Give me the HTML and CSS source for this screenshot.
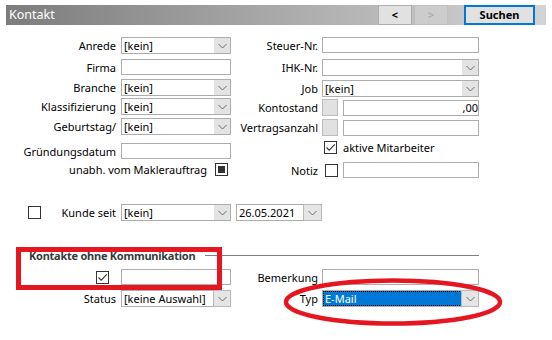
FILE: index.html
```html
<!DOCTYPE html>
<html lang="de">
<head>
<meta charset="utf-8">
<title>Kontakt</title>
<link rel="stylesheet" href="styles.css">
</head>
<body>
<div class="window">
  <div class="titlebar">
    <span class="title">Kontakt</span>
    <div class="nav">
      <button class="btn">&lt;</button>
      <button class="btn disabled">&gt;</button>
      <button class="btn primary">Suchen</button>
    </div>
  </div>

  <div class="form top">
    <!-- row 1 -->
    <label class="lbl">Anrede</label>
    <div class="combo"><span class="val">[kein]</span><span class="drop"><svg width="9" height="6" viewBox="0 0 9 6"><polyline points="0.5,1 4.5,5 8.5,1" fill="none" stroke="#6a6a6a" stroke-width="1"/></svg></span></div>
    <label class="lbl r">Steuer-Nr.</label>
    <div class="input"></div>

    <!-- row 2 -->
    <label class="lbl">Firma</label>
    <div class="input"></div>
    <label class="lbl r">IHK-Nr.</label>
    <div class="combo"><span class="val"></span><span class="drop"><svg width="9" height="6" viewBox="0 0 9 6"><polyline points="0.5,1 4.5,5 8.5,1" fill="none" stroke="#6a6a6a" stroke-width="1"/></svg></span></div>

    <!-- row 3 -->
    <label class="lbl">Branche</label>
    <div class="combo"><span class="val">[kein]</span><span class="drop"><svg width="9" height="6" viewBox="0 0 9 6"><polyline points="0.5,1 4.5,5 8.5,1" fill="none" stroke="#6a6a6a" stroke-width="1"/></svg></span></div>
    <label class="lbl r down1">Job</label>
    <div class="combo down1"><span class="val">[kein]</span><span class="drop"><svg width="9" height="6" viewBox="0 0 9 6"><polyline points="0.5,1 4.5,5 8.5,1" fill="none" stroke="#6a6a6a" stroke-width="1"/></svg></span></div>

    <!-- row 4 -->
    <label class="lbl">Klassifizierung</label>
    <div class="combo"><span class="val">[kein]</span><span class="drop"><svg width="9" height="6" viewBox="0 0 9 6"><polyline points="0.5,1 4.5,5 8.5,1" fill="none" stroke="#6a6a6a" stroke-width="1"/></svg></span></div>
    <label class="lbl r down1">Kontostand</label>
    <div class="pair down1"><span class="graybox"></span><div class="input grow num">,00</div></div>

    <!-- row 5 -->
    <label class="lbl">Geburtstag/</label>
    <div class="combo"><span class="val">[kein]</span><span class="drop"><svg width="9" height="6" viewBox="0 0 9 6"><polyline points="0.5,1 4.5,5 8.5,1" fill="none" stroke="#6a6a6a" stroke-width="1"/></svg></span></div>
    <label class="lbl r down1">Vertragsanzahl</label>
    <div class="pair down1"><span class="graybox"></span><div class="input grow"></div></div>

    <!-- row 6 -->
    <label class="lbl down4">Gründungsdatum</label>
    <div class="input down4"></div>
    <span class="empty"></span>
    <div class="pair down1">
      <span class="check"><svg width="11" height="11" viewBox="0 0 11 11"><polyline points="1.5,5.5 4.2,8.2 9.8,2.4" fill="none" stroke="#333" stroke-width="1.1"/></svg></span>
      <span class="ctext">aktive Mitarbeiter</span>
    </div>

    <!-- row 7 -->
    <div class="span2 down1">
      <span class="ltext">unabh. vom Maklerauftrag</span>
      <span class="check ind"><span class="dot"></span></span>
    </div>
    <label class="lbl r down1">Notiz</label>
    <div class="pair down1">
      <span class="check small"></span>
      <div class="input grow"></div>
    </div>
  </div>

  <div class="form kunde">
    <div class="lblflex">
      <span class="check"></span>
      <span class="ktext">Kunde seit</span>
    </div>
    <div class="combo"><span class="val">[kein]</span><span class="drop"><svg width="9" height="6" viewBox="0 0 9 6"><polyline points="0.5,1 4.5,5 8.5,1" fill="none" stroke="#6a6a6a" stroke-width="1"/></svg></span></div>
    <div class="combo date"><span class="val">26.05.2021</span><span class="drop boxed"><svg width="9" height="6" viewBox="0 0 9 6"><polyline points="0.5,1 4.5,5 8.5,1" fill="none" stroke="#6a6a6a" stroke-width="1"/></svg></span></div>
  </div>

  <div class="grouphead">
    <span class="gtitle">Kontakte ohne Kommunikation</span>
    <span class="gline"></span>
  </div>

  <div class="form group">
    <div class="lblflex end">
      <span class="check"><svg width="11" height="11" viewBox="0 0 11 11"><polyline points="1.5,5.5 4.2,8.2 9.8,2.4" fill="none" stroke="#333" stroke-width="1.1"/></svg></span>
    </div>
    <div class="input"></div>
    <label class="lbl r">Bemerkung</label>
    <div class="input"></div>

    <label class="lbl">Status</label>
    <div class="combo"><span class="val">[keine Auswahl]</span><span class="drop boxed"><svg width="9" height="6" viewBox="0 0 9 6"><polyline points="0.5,1 4.5,5 8.5,1" fill="none" stroke="#6a6a6a" stroke-width="1"/></svg></span></div>
    <label class="lbl r">Typ</label>
    <div class="combo"><span class="val"><span class="sel">E-Mail</span></span><span class="drop boxed"><svg width="9" height="6" viewBox="0 0 9 6"><polyline points="0.5,1 4.5,5 8.5,1" fill="none" stroke="#6a6a6a" stroke-width="1"/></svg></span></div>
  </div>

  <div class="mark-rect"></div>
  <svg class="mark-ellipse" width="232" height="60" viewBox="0 0 232 60">
    <ellipse cx="116" cy="30" rx="107" ry="21.5" fill="none" stroke="#e5161f" stroke-width="4.5"/>
  </svg>
</div>
</body>
</html>
```

FILE: styles.css
```css
* { box-sizing: border-box; }

html, body {
  margin: 0;
  padding: 0;
  background: #ffffff;
}

body {
  font-family: "Segoe UI", "Noto Sans", "Open Sans", sans-serif;
  font-size: 11px;
  color: #000;
  width: 552px;
  height: 340px;
  overflow: hidden;
}

.window {
  position: relative;
  width: 552px;
  height: 340px;
}

/* title bar */
.titlebar {
  margin: 5px 6px 0 6px;
  height: 20px;
  display: flex;
  align-items: center;
  padding-left: 3px;
  background: linear-gradient(to right, #7c7c7c 0%, #a9a9a9 50%, #d4d4d4 100%);
}

.title {
  color: #fff;
  font-size: 12.5px;
  line-height: 20px;
}

.nav {
  margin-left: auto;
  display: flex;
  align-items: center;
  padding-right: 11px;
}

.btn {
  font-family: inherit;
  font-size: 11px;
  height: 20px;
  width: 34px;
  padding: 0;
  margin: 0 2px 0 0;
  border: 1px solid #adadad;
  background: #e1e1e1;
  color: #000;
  font-weight: 700;
  line-height: 16px;
}

.btn.disabled {
  background: #cccccc;
  border-color: #bfbfbf;
  color: #a2a2a2;
  font-weight: 400;
  margin-right: 16px;
}

.btn.primary {
  width: 71px;
  border: 2px solid #0078d7;
  margin: 0;
}

/* form grid */
.form {
  display: grid;
  grid-template-columns: 121px 110px 91px 157px;
  align-items: start;
}

.form.top {
  margin-top: 12px;
  grid-template-rows: 22px 20px 19px 20px 21px 22px 22px;
}

.lbl {
  text-align: right;
  padding-right: 5px;
  line-height: 17px;
  height: 17px;
  white-space: nowrap;
}

.lbl.r {
  padding-right: 4px;
}

.input {
  height: 16px;
  border: 1px solid #adadad;
  background: #fff;
}

.input.grow {
  flex: 1;
}

.input.num {
  text-align: right;
  line-height: 14px;
  padding-right: 0;
}

.combo {
  height: 17px;
  display: flex;
  border: 1px solid #adadad;
  background: #fff;
}

.combo .val {
  flex: 1;
  padding-left: 2px;
  line-height: 15px;
  white-space: nowrap;
  overflow: hidden;
  display: flex;
}

.combo .drop {
  width: 16px;
  background: #e3e3e3;
  display: flex;
  align-items: center;
  justify-content: center;
}

.combo .drop.boxed {
  width: 18px;
  border: 1px solid #b9b9b9;
  margin: -1px -1px -1px 0;
  background: #e5e5e5;
}

.pair {
  display: flex;
  align-items: center;
}

.graybox {
  width: 16px;
  height: 17px;
  background: #e1e1e1;
  border: 1px solid #bcbcbc;
  margin-right: 5px;
}

.down1 { margin-top: 1px; }
.down4 { margin-top: 4px; }

.check {
  width: 13px;
  height: 13px;
  border: 1px solid #333;
  background: #fff;
  display: flex;
  align-items: center;
  justify-content: center;
  flex: none;
}

.pair .check {
  margin-left: 2px;
  margin-right: 6px;
}

.check.small {
  margin-left: 3px;
  margin-right: 5px;
}

.check.ind .dot {
  width: 7px;
  height: 7px;
  background: #333;
}

.ctext {
  line-height: 15px;
}

.span2 {
  grid-column: 1 / span 2;
  display: flex;
  justify-content: flex-end;
  align-items: center;
  padding-right: 3px;
  height: 15px;
}

.span2 .check {
  margin-left: 8px;
}

/* Kunde seit row */
.kunde {
  margin-top: 21px;
}

.lblflex {
  display: flex;
  align-items: center;
  height: 17px;
  padding-right: 5px;
}

.lblflex .check {
  margin-left: 28px;
}

.ktext {
  margin-left: auto;
  line-height: 17px;
}

.combo.date {
  width: 86px;
  margin-left: 5px;
}

.combo.date .drop.boxed {
  width: 19px;
}

/* group */
.grouphead {
  margin-top: 26px;
  display: flex;
  align-items: center;
  height: 16px;
  padding-left: 29px;
  width: 479px;
}

.gtitle {
  font-weight: 700;
  color: #3a3a3a;
  white-space: nowrap;
  letter-spacing: -0.25px;
}

.gline {
  flex: 1;
  height: 1px;
  background: #7f7f7f;
  margin-left: 10px;
}

.form.group {
  margin-top: 6px;
  grid-template-rows: 21px 17px;
}

.lblflex.end {
  justify-content: flex-end;
  padding-right: 12px;
  height: 15px;
  margin-top: 1px;
}

.sel {
  background: #0078d7;
  color: #fff;
  flex: 1;
  margin: 0 -1px 0 -2px;
  padding-left: 2px;
  outline: 1px dotted #000;
  outline-offset: -1px;
}

/* annotations */
.mark-rect {
  position: absolute;
  left: 16px;
  top: 242px;
  width: 206px;
  height: 43px;
  border: 5px solid #e5161f;
}

.mark-ellipse {
  position: absolute;
  left: 277px;
  top: 267px;
}
```
